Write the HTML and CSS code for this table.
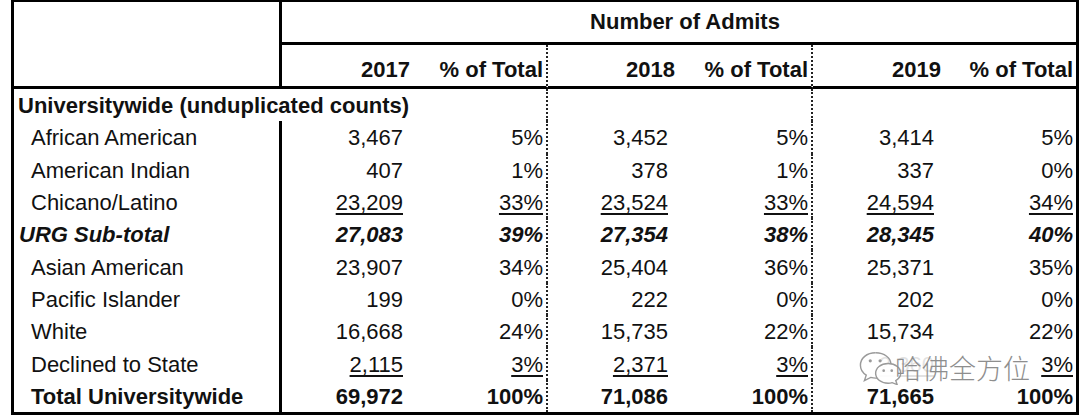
FILE: index.html
```html
<!DOCTYPE html>
<html lang="en">
<head>
<meta charset="utf-8">
<title>Number of Admits</title>
<link rel="stylesheet" href="styles.css">
</head>
<body>
<div class="sheet">
  <div class="corner"></div>
  <div class="admits">Number of Admits</div>
  <div class="hd num">2017</div>
  <div class="hd pct dot">% of Total</div>
  <div class="hd num">2018</div>
  <div class="hd pct dot">% of Total</div>
  <div class="hd num">2019</div>
  <div class="hd pct last">% of Total</div>

  <div class="lbl section">Universitywide (unduplicated counts)</div>
  <div class="pct dot"></div><div class="num"></div><div class="pct dot"></div><div class="num"></div><div class="pct last"></div>

  <div class="lbl">African American</div>
  <div class="num">3,467</div><div class="pct dot">5%</div><div class="num">3,452</div><div class="pct dot">5%</div><div class="num">3,414</div><div class="pct last">5%</div>

  <div class="lbl">American Indian</div>
  <div class="num">407</div><div class="pct dot">1%</div><div class="num">378</div><div class="pct dot">1%</div><div class="num">337</div><div class="pct last">0%</div>

  <div class="lbl">Chicano/Latino</div>
  <div class="num"><u>23,209</u></div><div class="pct dot"><u>33%</u></div><div class="num"><u>23,524</u></div><div class="pct dot"><u>33%</u></div><div class="num"><u>24,594</u></div><div class="pct last"><u>34%</u></div>

  <div class="lbl sub">URG Sub-total</div>
  <div class="num sub">27,083</div><div class="pct dot sub">39%</div><div class="num sub">27,354</div><div class="pct dot sub">38%</div><div class="num sub">28,345</div><div class="pct last sub">40%</div>

  <div class="lbl">Asian American</div>
  <div class="num">23,907</div><div class="pct dot">34%</div><div class="num">25,404</div><div class="pct dot">36%</div><div class="num">25,371</div><div class="pct last">35%</div>

  <div class="lbl">Pacific Islander</div>
  <div class="num">199</div><div class="pct dot">0%</div><div class="num">222</div><div class="pct dot">0%</div><div class="num">202</div><div class="pct last">0%</div>

  <div class="lbl">White</div>
  <div class="num">16,668</div><div class="pct dot">24%</div><div class="num">15,735</div><div class="pct dot">22%</div><div class="num">15,734</div><div class="pct last">22%</div>

  <div class="lbl">Declined to State</div>
  <div class="num"><u>2,115</u></div><div class="pct dot"><u>3%</u></div><div class="num"><u>2,371</u></div><div class="pct dot"><u>3%</u></div><div class="num"><u>2,360</u></div><div class="pct last"><u>3%</u></div>

  <div class="lbl total">Total Universitywide</div>
  <div class="num total">69,972</div><div class="pct dot total">100%</div><div class="num total">71,086</div><div class="pct dot total">100%</div><div class="num total">71,665</div><div class="pct last total">100%</div>
</div>

<div class="wm">
  <svg class="wm-icon" width="48" height="34" viewBox="0 0 50 38">
    <path d="M19 2 C9 2 2 8 2 16 C2 20.5 4.5 24.5 8.5 27 L6.5 33 L13.5 29.5 C15.3 30 17.1 30.3 19 30.3 C20 30.3 21 30.2 22 30.1" fill="none" stroke="#9a9a9a" stroke-width="1.6"/>
    <path d="M19 2 C29 2 36 8 36 14.5" fill="none" stroke="#9a9a9a" stroke-width="1.6"/>
    <circle cx="13" cy="11" r="1.8" fill="#9a9a9a"/>
    <circle cx="24" cy="11" r="1.8" fill="#9a9a9a"/>
    <path d="M33 14 C24.5 14 19 19 19 25 C19 31 24.5 36 33 36 C34.6 36 36.1 35.8 37.5 35.4 L43 37.5 L41.5 33 C45 31 47 28.2 47 25 C47 19 41.5 14 33 14 Z" fill="rgba(255,255,255,0.9)" stroke="#9a9a9a" stroke-width="1.6"/>
    <circle cx="28" cy="22" r="1.5" fill="#9a9a9a"/>
    <circle cx="37" cy="22" r="1.5" fill="#9a9a9a"/>
  </svg>
  <span class="wm-text">哈佛全方位</span>
</div>
</body>
</html>
```

FILE: styles.css
```css
* {
  box-sizing: border-box;
}

html, body {
  margin: 0;
  padding: 0;
  background: #ffffff;
}

body {
  position: relative;
  width: 1080px;
  height: 415px;
  overflow: hidden;
  font-family: "Liberation Sans", Arial, sans-serif;
  font-size: 22px;
  color: #111111;
}

.sheet {
  margin-left: 11px;
  width: 1068px;
  display: grid;
  grid-template-columns: 268px 133px 133px 132px 133px 133px 130px;
  grid-template-rows: 43px 44px repeat(10, 32.3px);
  border-top: 2px solid #000;
  border-left: 3px solid #000;
  border-right: 3px solid #000;
  border-bottom: 3px solid #000;
}

.sheet > div {
  display: flex;
  align-items: center;
  white-space: nowrap;
  line-height: 26px;
  padding-top: 2px;
}

.corner {
  grid-column: 1;
  grid-row: 1 / span 2;
  border-right: 3px solid #000;
  border-bottom: 3px solid #000;
}

.sheet > .admits {
  grid-column: 2 / span 6;
  justify-content: center;
  font-weight: bold;
  border-bottom: 3px solid #000;
  padding-left: 12px;
  padding-top: 0;
}

.sheet > .hd {
  font-weight: bold;
  border-bottom: 3px solid #000;
  align-items: flex-end;
  padding-bottom: 3px;
  padding-top: 0;
}

.num {
  justify-content: flex-end;
  padding-right: 12px;
}

.hd.num {
  padding-right: 5px;
}

.pct {
  justify-content: flex-end;
  padding-right: 3px;
}

.pct.last {
  padding-right: 3px;
}

.dot {
  border-right: 2px dotted #222;
}

.lbl {
  border-right: 3px solid #000;
  padding-left: 17px;
}

.lbl.section {
  grid-column: span 2;
  border-right: none;
  padding-left: 4px;
  font-weight: bold;
}

.sub {
  font-weight: bold;
  font-style: italic;
}

.lbl.sub {
  padding-left: 5px;
}

.total {
  font-weight: bold;
}

u {
  text-decoration: underline;
  text-decoration-thickness: 1.5px;
  text-underline-offset: 3px;
}

.wm {
  position: absolute;
  left: 857px;
  top: 351px;
  height: 33px;
  display: flex;
  align-items: center;
  background: rgba(255, 255, 255, 0.88);
  padding-right: 1px;
}

.wm-icon {
  display: block;
  margin-right: -10px;
}

.wm-text {
  font-family: "Noto Sans CJK SC", "Noto Sans", sans-serif;
  font-size: 27px;
  font-weight: 300;
  color: #8e8e8e;
  line-height: 32px;
}
```
